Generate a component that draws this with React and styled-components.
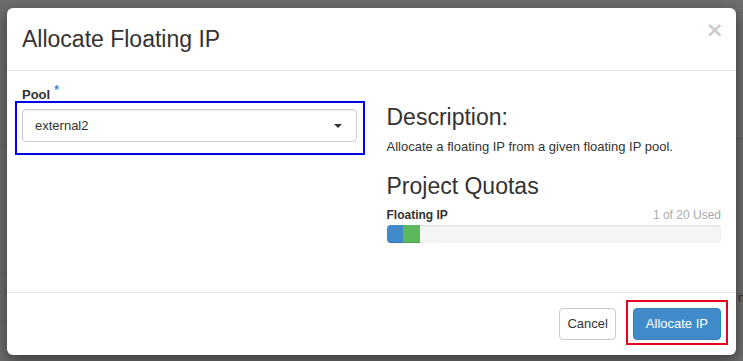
import React from "react";
import styled, { createGlobalStyle } from "styled-components";

const GlobalStyle = createGlobalStyle`
  html, body {
    margin: 0;
    padding: 0;
    background: #6e6e6e;
  }
  * { box-sizing: border-box; }
  body {
    font-family: "Liberation Sans", Helvetica, Arial, sans-serif;
    color: #333;
  }
`;

const Backdrop = styled.div`
  position: relative;
  width: 743px;
  height: 361px;
  overflow: hidden;
  padding: 8px 0 0 7px;
  background:
    linear-gradient(#646464, #646464) 0 12px / 100% 1px no-repeat,
    linear-gradient(#656565, #656565) 0 146px / 7px 1px no-repeat,
    linear-gradient(#656565, #656565) 736px 138px / 7px 1px no-repeat,
    linear-gradient(#656565, #656565) 0 273px / 7px 1px no-repeat,
    linear-gradient(#656565, #656565) 0 321px / 7px 1px no-repeat,
    #6e6e6e;
`;

const PeekText = styled.span`
  position: absolute;
  left: 738px;
  top: 290px;
  font-size: 13px;
  color: #2a2a2a;
`;

const Modal = styled.div`
  width: 729px;
  background: #fff;
  border-radius: 6px;
  box-shadow: 0 5px 15px rgba(0, 0, 0, 0.5);
  overflow: visible;
`;

const Header = styled.div`
  display: flex;
  justify-content: space-between;
  align-items: flex-start;
  padding: 15px;
  border-bottom: 1px solid #e5e5e5;
`;

const Title = styled.h4`
  margin: 0;
  font-size: 23px;
  font-weight: 400;
  line-height: 32px;
  color: #333;
`;

const Close = styled.span`
  font-family: "DejaVu Sans", "Liberation Sans", sans-serif;
  font-size: 22px;
  font-weight: 700;
  line-height: 22px;
  color: #000;
  opacity: 0.2;
  margin-top: -4px;
  margin-right: -3px;
`;

const Body = styled.div`
  height: 221px;
  padding: 15px;
  display: grid;
  grid-template-columns: 1fr 1fr;
  column-gap: 30px;
`;

const Column = styled.div`
  display: flex;
  flex-direction: column;
`;

const Label = styled.label`
  display: block;
  font-size: 13px;
  font-weight: 700;
  line-height: 18px;
  margin-bottom: 5px;
`;

const Required = styled.span`
  color: #428bca;
  font-size: 12px;
  margin-left: 4px;
  position: relative;
  top: -5px;
`;

const SelectWrap = styled.div`
  position: relative;
`;

const Select = styled.div`
  height: 33px;
  border: 1px solid #ccc;
  border-radius: 4px;
  padding: 0 14px 0 12px;
  display: flex;
  align-items: center;
  justify-content: space-between;
  font-size: 13px;
  color: #333;
  box-shadow: inset 0 1px 1px rgba(0, 0, 0, 0.075);
`;

const Caret = styled.span`
  width: 0;
  height: 0;
  border-top: 4px solid #333;
  border-left: 4px solid transparent;
  border-right: 4px solid transparent;
`;

const Highlight = styled.div`
  position: absolute;
  top: ${(p) => p.$top}px;
  left: ${(p) => p.$left}px;
  right: ${(p) => p.$right}px;
  bottom: ${(p) => p.$bottom}px;
  border: 2px solid ${(p) => p.$color};
  pointer-events: none;
`;

const Heading = styled.h3`
  margin: ${(p) => p.$top}px 0 0;
  font-size: 23px;
  font-weight: 400;
  line-height: 26px;
  color: #333;
`;

const Text = styled.p`
  margin: 8px 0 0;
  font-size: 13px;
  line-height: 18px;
`;

const QuotaRow = styled.div`
  margin-top: 8px;
  display: flex;
  justify-content: space-between;
  font-size: 12px;
  line-height: 16px;
`;

const QuotaName = styled.strong`
  font-weight: 700;
`;

const QuotaUsed = styled.span`
  color: #aaa;
`;

const Progress = styled.div`
  margin-top: 2px;
  height: 18px;
  display: flex;
  background: #f5f5f5;
  border-radius: 4px;
  overflow: hidden;
  box-shadow: inset 0 1px 2px rgba(0, 0, 0, 0.1);
`;

const Bar = styled.div`
  height: 100%;
  background: ${(p) => p.$color};
  box-shadow: inset 0 -1px 0 rgba(0, 0, 0, 0.15);
`;

const Footer = styled.div`
  display: flex;
  justify-content: flex-end;
  align-items: center;
  gap: 17px;
  padding: 15px;
  border-top: 1px solid #e5e5e5;
`;

const Button = styled.button`
  position: relative;
  height: 32px;
  padding: 0 ${(p) => p.$pad}px;
  font-family: inherit;
  font-size: 13px;
  line-height: 18px;
  border-radius: 4px;
  border: 1px solid ${(p) => (p.$primary ? "#357ebd" : "#ccc")};
  background: ${(p) => (p.$primary ? "#428bca" : "#fff")};
  color: ${(p) => (p.$primary ? "#fff" : "#333")};
  cursor: pointer;
`;

const Action = styled.div`
  position: relative;
`;

export default function App() {
  const used = 1;
  const total = 20;
  return (
    <>
      <GlobalStyle />
      <Backdrop>
        <PeekText>m</PeekText>
        <Modal>
          <Header>
            <Title>Allocate Floating IP</Title>
            <Close>×</Close>
          </Header>
          <Body>
            <Column>
              <Label>
                Pool<Required>*</Required>
              </Label>
              <SelectWrap>
                <Select>
                  <span>external2</span>
                  <Caret />
                </Select>
                <Highlight $color="#0000f0" $top={-8} $left={-7} $right={-8} $bottom={-13} />
              </SelectWrap>
            </Column>
            <Column>
              <Heading $top={18}>Description:</Heading>
              <Text>Allocate a floating IP from a given floating IP pool.</Text>
              <Heading $top={17}>Project Quotas</Heading>
              <QuotaRow>
                <QuotaName>Floating IP</QuotaName>
                <QuotaUsed>
                  {used} of {total} Used
                </QuotaUsed>
              </QuotaRow>
              <Progress>
                <Bar $color="#428bca" style={{ width: `${(used / total) * 100}%` }} />
                <Bar $color="#5cb85c" style={{ width: `${(1 / total) * 100}%` }} />
              </Progress>
            </Column>
          </Body>
          <Footer>
            <Button $pad={7}>Cancel</Button>
            <Action>
              <Button $primary $pad={12}>Allocate IP</Button>
              <Highlight $color="#e8001c" $top={-8} $left={-7} $right={-7} $bottom={-5} />
            </Action>
          </Footer>
        </Modal>
      </Backdrop>
    </>
  );
}
